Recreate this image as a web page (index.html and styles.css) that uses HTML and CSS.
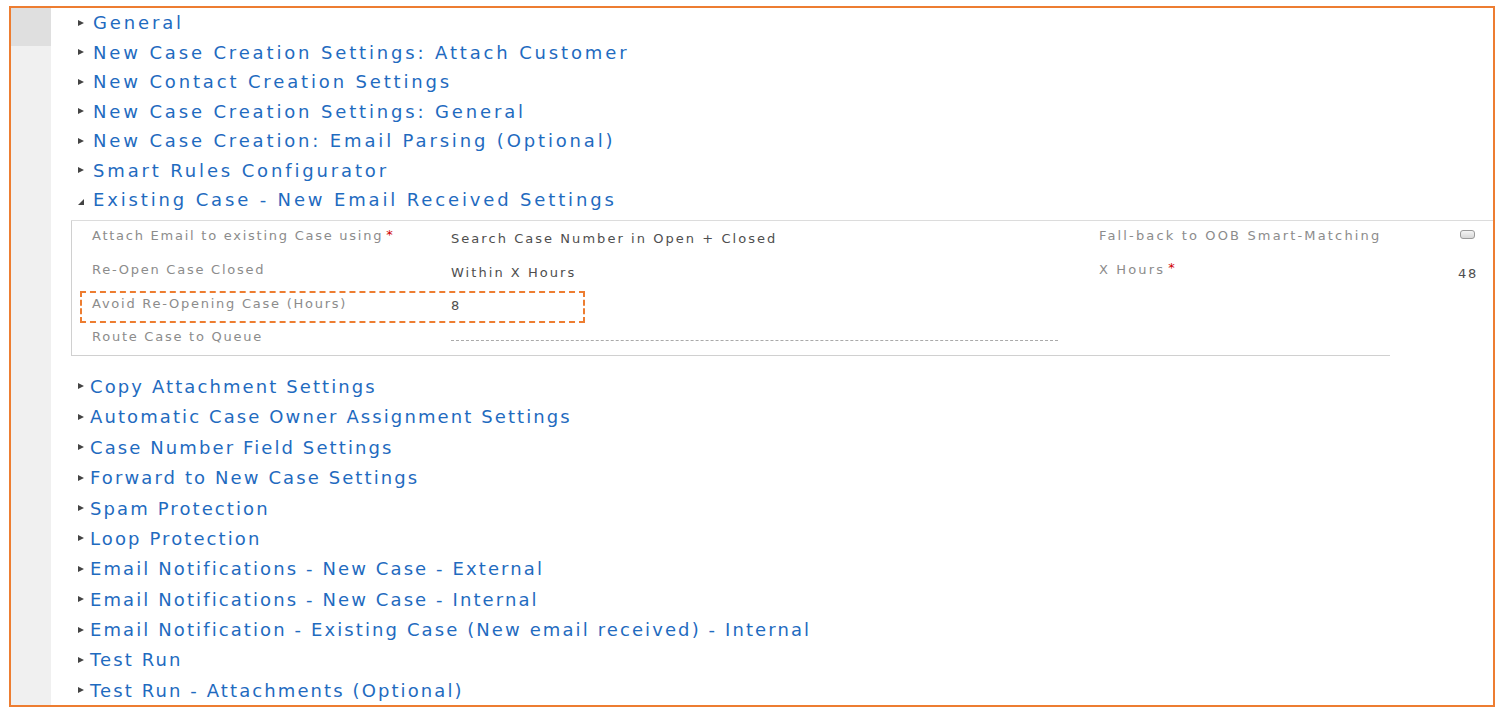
FILE: index.html
```html
<!DOCTYPE html>
<html>
<head>
<meta charset="utf-8">
<link rel="stylesheet" href="styles.css">
</head>
<body>
<div class="frame">
  <div class="rail"><div class="rail-top"></div></div>
  <div class="content">
    <ul class="sections">
      <li class="sec"><span class="tri"></span><a>General</a></li>
      <li class="sec"><span class="tri"></span><a>New Case Creation Settings: Attach Customer</a></li>
      <li class="sec"><span class="tri"></span><a>New Contact Creation Settings</a></li>
      <li class="sec"><span class="tri"></span><a>New Case Creation Settings: General</a></li>
      <li class="sec"><span class="tri"></span><a>New Case Creation: Email Parsing (Optional)</a></li>
      <li class="sec"><span class="tri"></span><a>Smart Rules Configurator</a></li>
      <li class="sec"><span class="tri open"></span><a>Existing Case - New Email Received Settings</a></li>
    </ul>
    <div class="panel">
      <div class="grid">
        <div class="lbl">Attach Email to existing Case using<span class="req">*</span></div>
        <div class="val">Search Case Number in Open + Closed</div>
        <div class="lbl wide">Fall-back to OOB Smart-Matching</div>
        <div class="val2"><span class="chk"></span></div>

        <div class="lbl">Re-Open Case Closed</div>
        <div class="val">Within X Hours</div>
        <div class="lbl wide">X Hours<span class="req">*</span></div>
        <div class="val2 num">48</div>

        <div class="lbl">Avoid Re-Opening Case (Hours)</div>
        <div class="val">8</div>
        <div class="lbl"></div>
        <div class="val2"></div>

        <div class="lbl">Route Case to Queue</div>
        <div class="val"><span class="empty"></span></div>
        <div class="lbl"></div>
        <div class="val2"></div>
      </div>
      <div class="highlight"></div>
    </div>
    <ul class="sections lower">
      <li class="sec"><span class="tri"></span><a>Copy Attachment Settings</a></li>
      <li class="sec"><span class="tri"></span><a>Automatic Case Owner Assignment Settings</a></li>
      <li class="sec"><span class="tri"></span><a>Case Number Field Settings</a></li>
      <li class="sec"><span class="tri"></span><a>Forward to New Case Settings</a></li>
      <li class="sec"><span class="tri"></span><a>Spam Protection</a></li>
      <li class="sec"><span class="tri"></span><a>Loop Protection</a></li>
      <li class="sec"><span class="tri"></span><a>Email Notifications - New Case - External</a></li>
      <li class="sec"><span class="tri"></span><a>Email Notifications - New Case - Internal</a></li>
      <li class="sec"><span class="tri"></span><a>Email Notification - Existing Case (New email received) - Internal</a></li>
      <li class="sec"><span class="tri"></span><a>Test Run</a></li>
      <li class="sec"><span class="tri"></span><a>Test Run - Attachments (Optional)</a></li>
    </ul>
  </div>
</div>
</body>
</html>
```
FILE: styles.css
```css
html, body {
  margin: 0;
  padding: 0;
  background: #ffffff;
  font-family: "DejaVu Sans", "Open Sans", sans-serif;
}
.frame {
  box-sizing: border-box;
  margin: 6px 6px 0 9px;
  height: 701px;
  border: 2px solid #ed7d31;
  display: flex;
  overflow: hidden;
}
.rail {
  width: 40px;
  flex: none;
  background: #f0f0f0;
}
.rail-top {
  height: 38px;
  background: #dfdfdf;
}
.content {
  flex: 1;
  min-width: 0;
}
.sections {
  list-style: none;
  margin: 0;
  padding: 0 0 0 27px;
}
.sec {
  height: 29.5px;
  display: flex;
  align-items: center;
  white-space: nowrap;
}
.sec a {
  color: #1f6bbf;
  font-size: 18px;
  letter-spacing: 2.85px;
}
.lower {
  margin-top: 15px;
  padding-left: 27px;
}
.lower .sec {
  height: 30.4px;
}
.lower .sec a {
  letter-spacing: 2.1px;
}
.lower .tri {
  margin-right: 6px;
}
.tri {
  width: 0;
  height: 0;
  border-style: solid;
  border-width: 3.5px 0 3.5px 6px;
  border-color: transparent transparent transparent #444;
  margin-right: 9px;
  flex: none;
}
.tri.open {
  border-width: 0 0 6px 6px;
  border-color: transparent transparent #444 transparent;
  margin-top: 4px;
}
.panel {
  position: relative;
  margin: 5px 0 0 20px;
  border-top: 1px solid #dcdcdc;
}
.grid {
  width: 1319px;
  box-sizing: border-box;
  border-left: 1px solid #d0d0d0;
  border-bottom: 1px solid #d0d0d0;
  display: grid;
  grid-template-columns: 359px 648px 359px 40px;
  grid-auto-rows: 33.7px;
  padding: 0 0 0 20px;
}
.lbl, .val, .val2 {
  font-size: 13px;
  letter-spacing: 1.75px;
  white-space: nowrap;
  display: flex;
  align-items: center;
}
.lbl {
  color: #8c8c8c;
  padding-bottom: 3px;
}
.lbl.wide {
  letter-spacing: 2.15px;
}
.val {
  color: #4e4e4e;
  padding-top: 2px;
  letter-spacing: 2.05px;
}
.val2 {
  color: #4e4e4e;
  padding-top: 4px;
}
.req {
  color: #d00000;
  font-size: 13px;
  margin-left: 3px;
  align-self: flex-start;
  margin-top: 6px;
  letter-spacing: 0;
}
.chk {
  display: block;
  width: 13px;
  height: 7px;
  border: 1px solid #9a9a9a;
  border-radius: 3px;
  background: linear-gradient(#f4f4f4, #d8d8d8);
  margin: -10px 0 0 2px;
}
.empty {
  display: block;
  width: 607px;
  border-top: 1px dashed #aaaaaa;
  margin-top: 2px;
}
.highlight {
  position: absolute;
  left: 9px;
  top: 70px;
  width: 501px;
  height: 28px;
  border: 2px dashed #ed7d31;
}
```
